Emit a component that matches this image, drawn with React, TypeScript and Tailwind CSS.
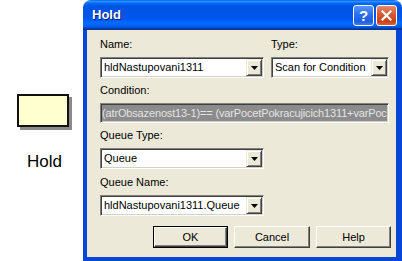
import React from "react";

function DropBtn() {
  return (
    <div className="w-[16px] h-full bg-[#ECE9D8] flex items-center justify-center border border-t-[#ECE9D8] border-l-[#ECE9D8] border-b-[#404040] border-r-[#404040] shadow-[inset_1px_1px_0_#ffffff,inset_-1px_-1px_0_#808080]">
      <svg width="7" height="4" viewBox="0 0 7 4">
        <polygon points="0,0 7,0 3.5,4" fill="#000" />
      </svg>
    </div>
  );
}

function Combo({ text, w }: { text: string; w: string }) {
  return (
    <div className={`${w} h-[21px] flex bg-white border border-t-[#808080] border-l-[#808080] border-b-white border-r-white`}>
      <div className="flex-1 flex p-[1px] shadow-[inset_1px_1px_0_#404040,inset_-1px_-1px_0_#d4d0c8]">
        <div className="flex-1 flex items-center pl-[2px] text-[11px] leading-[13px] text-black whitespace-nowrap overflow-hidden">
          {text}
        </div>
        <DropBtn />
      </div>
    </div>
  );
}

function Label({ children }: { children: React.ReactNode }) {
  return <div className="h-[13px] text-[11px] leading-[13px] text-black">{children}</div>;
}

function Btn({ text, def, w }: { text: string; def?: boolean; w: string }) {
  return (
    <div className={`${w} h-[22px] ${def ? "border border-black" : ""}`}>
      <div className="w-full h-full bg-[#ECE9D8] flex items-center justify-center text-[11px] text-black border border-t-white border-l-white border-b-[#404040] border-r-[#404040] shadow-[inset_-1px_-1px_0_#808080]">
        {text}
      </div>
    </div>
  );
}

export default function App() {
  return (
    <div className="w-[402px] h-[261px] bg-white flex overflow-hidden font-['Liberation_Sans',Arial,sans-serif]">
      <div className="w-[83px] flex flex-col items-start pl-[17px]">
        <div className="mt-[94px] w-[52px] h-[33px] bg-[#ffffcf] border-2 border-[#111] shadow-[3px_3px_0_#8a8a8a]" />
        <div className="mt-[25px] ml-[10px] text-[17px] leading-[20px] text-black">Hold</div>
      </div>
      <div className="flex-1 flex flex-col">
        <div className="h-[30px] rounded-t-[8px] flex items-center pl-[9px] pr-[5px] bg-[linear-gradient(to_bottom,#0058ee_0%,#3593ff_4%,#288eff_6%,#127dff_8%,#036ffc_10%,#0262ee_14%,#0057e5_20%,#0054e3_24%,#0055eb_56%,#005bf5_66%,#026afe_76%,#0062ef_86%,#0052d6_92%,#0040ab_94%,#003092_100%)]">
          <div className="text-white font-bold text-[13px] [text-shadow:1px_1px_#0f1b7a]">Hold</div>
          <div className="ml-auto flex gap-[2px]">
            <div className="w-[21px] h-[21px] rounded-[3px] border border-white bg-[linear-gradient(to_bottom,#5a94ff,#2b6ef0_45%,#1f5ee0_80%,#3a7bf5)] flex items-center justify-center text-white font-bold text-[15px] leading-none">
              ?
            </div>
            <div className="w-[21px] h-[21px] rounded-[3px] border border-white bg-[linear-gradient(to_bottom,#e98a6a,#d9582f_45%,#c8421c_80%,#d9623a)] flex items-center justify-center">
              <svg width="11" height="11" viewBox="0 0 11 11">
                <path d="M1.5 1.5 L9.5 9.5 M9.5 1.5 L1.5 9.5" stroke="#fff" strokeWidth="2.2" strokeLinecap="square" />
              </svg>
            </div>
          </div>
        </div>
        <div className="flex-1 border-l-4 border-r-[6px] border-b-4 border-[#0846d8]">
          <div className="w-full h-full bg-[#ECE9D8] pl-[13px] pt-[8px] flex flex-col">
            <div className="flex gap-[7px]">
              <div className="flex flex-col w-[164px]">
                <Label>Name:</Label>
                <div className="mt-[6px]">
                  <Combo text="hldNastupovani1311" w="w-[164px]" />
                </div>
              </div>
              <div className="flex flex-col w-[118px]">
                <Label>Type:</Label>
                <div className="mt-[6px]">
                  <Combo text="Scan for Condition" w="w-[118px]" />
                </div>
              </div>
            </div>
            <div className="mt-[6px]">
              <Label>Condition:</Label>
            </div>
            <div className="mt-[6px] w-[289px] h-[20px] border border-t-[#808080] border-l-[#808080] border-b-white border-r-white">
              <div className="w-full h-full bg-[#8b8b8b] shadow-[inset_1px_1px_0_#404040,inset_-1px_-1px_0_#d4d0c8] flex items-center pl-[1px] text-[11px] tracking-[-0.15px] text-[#e4e4e4] whitespace-nowrap overflow-hidden">
                (atrObsazenost13-1)== (varPocetPokracujicich1311+varPoc
              </div>
            </div>
            <div className="mt-[6px]">
              <Label>Queue Type:</Label>
            </div>
            <div className="mt-[6px]">
              <Combo text="Queue" w="w-[164px]" />
            </div>
            <div className="mt-[7px]">
              <Label>Queue Name:</Label>
            </div>
            <div className="mt-[6px]">
              <Combo text="hldNastupovani1311.Queue" w="w-[164px]" />
            </div>
            <div className="mt-[10px] flex gap-[6px] pl-[53px]">
              <Btn text="OK" def w="w-[75px]" />
              <Btn text="Cancel" w="w-[76px]" />
              <Btn text="Help" w="w-[75px]" />
            </div>
          </div>
        </div>
      </div>
    </div>
  );
}
